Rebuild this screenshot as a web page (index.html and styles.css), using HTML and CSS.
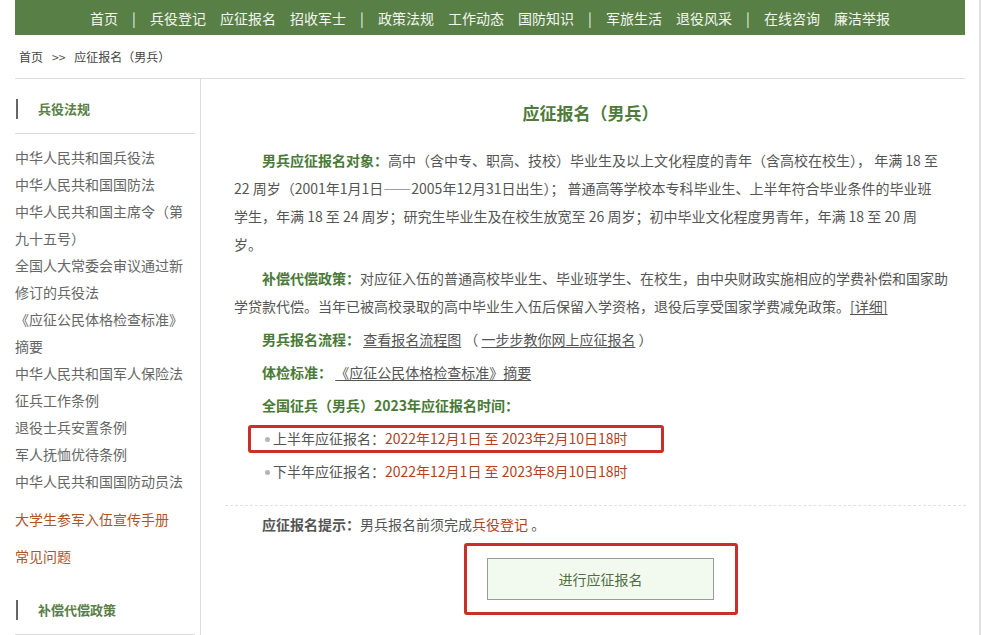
FILE: index.html
```html
<!DOCTYPE html>
<html lang="zh-CN">
<head>
<meta charset="utf-8">
<title>应征报名（男兵）</title>
<link rel="stylesheet" href="styles.css">
</head>
<body>
<div class="page">
  <div class="wrap">
    <nav class="nav">
      <a>首页</a><span class="sep">|</span>
      <a>兵役登记</a><a>应征报名</a><a>招收军士</a><span class="sep">|</span>
      <a>政策法规</a><a>工作动态</a><a>国防知识</a><span class="sep">|</span>
      <a>军旅生活</a><a>退役风采</a><span class="sep">|</span>
      <a>在线咨询</a><a>廉洁举报</a>
    </nav>
    <div class="crumb"><span>首页</span><span class="gt">&gt;&gt;</span><span>应征报名（男兵）</span></div>
    <div class="main">
      <aside class="side">
        <div class="side-head"><div class="side-title">兵役法规</div></div>
        <ul class="side-list">
          <li>中华人民共和国兵役法</li>
          <li>中华人民共和国国防法</li>
          <li>中华人民共和国主席令（第九十五号）</li>
          <li>全国人大常委会审议通过新修订的兵役法</li>
          <li>《应征公民体格检查标准》摘要</li>
          <li>中华人民共和国军人保险法</li>
          <li>征兵工作条例</li>
          <li>退役士兵安置条例</li>
          <li>军人抚恤优待条例</li>
          <li>中华人民共和国国防动员法</li>
        </ul>
        <div class="side-link first">大学生参军入伍宣传手册</div>
        <div class="side-link">常见问题</div>
        <div class="side-head second"><div class="side-title">补偿代偿政策</div></div>
      </aside>
      <section class="content">
        <h1 class="title">应征报名（男兵）</h1>
        <p class="para"><b class="lbl">男兵应征报名对象：</b>高中（含中专、职高、技校）毕业生及以上文化程度的青年（含高校在校生）， 年满 18 至 22 周岁（2001年1月1日——2005年12月31日出生）； 普通高等学校本专科毕业生、上半年符合毕业条件的毕业班<br>学生，年满 18 至 24 周岁；研究生毕业生及在校生放宽至 26 周岁；初中毕业文化程度男青年，年满 18 至 20 周<br>岁。</p>
        <p class="para"><b class="lbl">补偿代偿政策：</b>对应征入伍的普通高校毕业生、毕业班学生、在校生，由中央财政实施相应的学费补偿和国家助学贷款代偿。当年已被高校录取的高中毕业生入伍后保留入学资格，退役后享受国家学费减免政策。<a class="ul">[详细]</a></p>
        <p class="para"><b class="lbl">男兵报名流程：</b> <a class="ul">查看报名流程图</a> （ <a class="ul">一步步教你网上应征报名</a> ）</p>
        <p class="para"><b class="lbl">体检标准：</b> <a class="ul">《应征公民体格检查标准》摘要</a></p>
        <p class="para"><b class="lbl">全国征兵（男兵）2023年应征报名时间：</b></p>
        <ul class="times">
          <li class="marked"><span class="dot"></span>上半年应征报名：<span class="red">2022年12月1日 至 2023年2月10日18时</span></li>
          <li><span class="dot"></span>下半年应征报名：<span class="red">2022年12月1日 至 2023年8月10日18时</span></li>
        </ul>
        <div class="divider"></div>
        <p class="para tip"><b class="lbl-dark">应征报名提示：</b>男兵报名前须完成<a class="red">兵役登记</a> 。</p>
        <div class="btn-row">
          <div class="btn-box"><button class="btn">进行应征报名</button></div>
        </div>
      </section>
    </div>
  </div>
</div>
</body>
</html>
```

FILE: styles.css
```css
html, body {
  margin: 0;
  padding: 0;
  background: #fff;
}
body {
  font-family: "Noto Sans CJK SC", "Microsoft YaHei", sans-serif;
  color: #555;
  font-size: 14px;
  overflow: hidden;
}
.page {
  width: 979px;
  height: 635px;
  border-right: 2px solid #e0e0e0;
}
.wrap {
  margin-left: 15px;
  width: 950px;
}
.nav {
  height: 35px;
  background: #587f46;
  display: flex;
  justify-content: center;
  align-items: center;
  gap: 14px;
  font-size: 14px;
  color: #f4f6f0;
}
.nav a {
  line-height: 20px;
}
.sep {
  width: 4px;
  text-align: center;
  display: inline-block;
  overflow: visible;
}
.crumb {
  height: 43px;
  line-height: 43px;
  padding-left: 4px;
  font-size: 12px;
  color: #444;
  border-bottom: 1px solid #dcdcdc;
}
.crumb .gt {
  margin: 0 9px;
  color: #555;
}
.main {
  display: flex;
  align-items: stretch;
  height: 556px;
}
.side {
  width: 185px;
  flex: none;
  border-right: 1px solid #dcdcdc;
}
.side-head {
  padding: 20px 0 14px;
  margin-right: 5px;
  border-bottom: 1px solid #dcdcdc;
}
.side-head.second {
  margin-top: 10px;
}
.side-title {
  height: 20px;
  line-height: 20px;
  border-left: 2px solid #666;
  margin-left: 1px;
  padding-left: 20px;
  font-size: 13px;
  font-weight: bold;
  color: #5a7f47;
}
.side-list {
  list-style: none;
  margin: 0;
  padding: 10px 10px 0 0;
}
.side-list li {
  line-height: 27px;
  color: #666;
}
.side-link {
  line-height: 27px;
  margin-top: 10px;
  color: #b4531f;
}
.side-link.first {
  margin-top: 11px;
}
.content {
  flex: 1;
  padding: 0 15px 0 33px;
  min-width: 0;
}
.title {
  margin: 20px 0 19px;
  font-size: 17px;
  line-height: 28px;
  font-weight: bold;
  text-align: center;
  color: #4e7a3b;
  padding-right: 3px;
}
.para {
  margin: 0 0 5px;
  line-height: 28px;
  text-indent: 28px;
}
.para:first-of-type {
  margin-bottom: 6px;
}
.lbl {
  color: #4a7a37;
  font-weight: bold;
}
.lbl-dark {
  color: #555;
  font-weight: bold;
}
.ul {
  color: #555;
  text-decoration: underline;
  text-underline-offset: 2px;
}
.red {
  color: #b5401d;
}
.times {
  list-style: none;
  margin: 0;
  padding: 0;
}
.times li {
  line-height: 28px;
  margin-bottom: 5px;
  padding-left: 31px;
  position: relative;
  color: #555;
}
.dot {
  display: inline-block;
  width: 5px;
  height: 5px;
  border-radius: 50%;
  background: #b5b5b5;
  margin-right: 3px;
  vertical-align: middle;
  position: relative;
  top: -1px;
}
.times li.marked::after {
  content: "";
  position: absolute;
  left: 14px;
  top: 1px;
  width: 410px;
  height: 22px;
  border: 3px solid #c9302a;
  border-radius: 3px;
}
.divider {
  margin: 20px -16px 0 -9px;
  border-top: 1px dashed #e2e2e2;
}
.tip {
  margin-top: 4px;
}
.btn-row {
  margin-top: 20px;
  padding-left: 253px;
}
.btn-box {
  position: relative;
  width: 227px;
}
.btn-box::after {
  content: "";
  position: absolute;
  top: -15px;
  left: -23px;
  right: -24px;
  bottom: -15px;
  border: 3px solid #c9302a;
  border-radius: 3px;
  pointer-events: none;
}
.btn {
  display: block;
  width: 227px;
  height: 42px;
  border: 1px solid #9a9a9a;
  background: #f2faef;
  color: #4f6e44;
  font-family: "Noto Sans CJK SC", sans-serif;
  font-size: 14px;
  padding: 0;
  cursor: pointer;
}
```
